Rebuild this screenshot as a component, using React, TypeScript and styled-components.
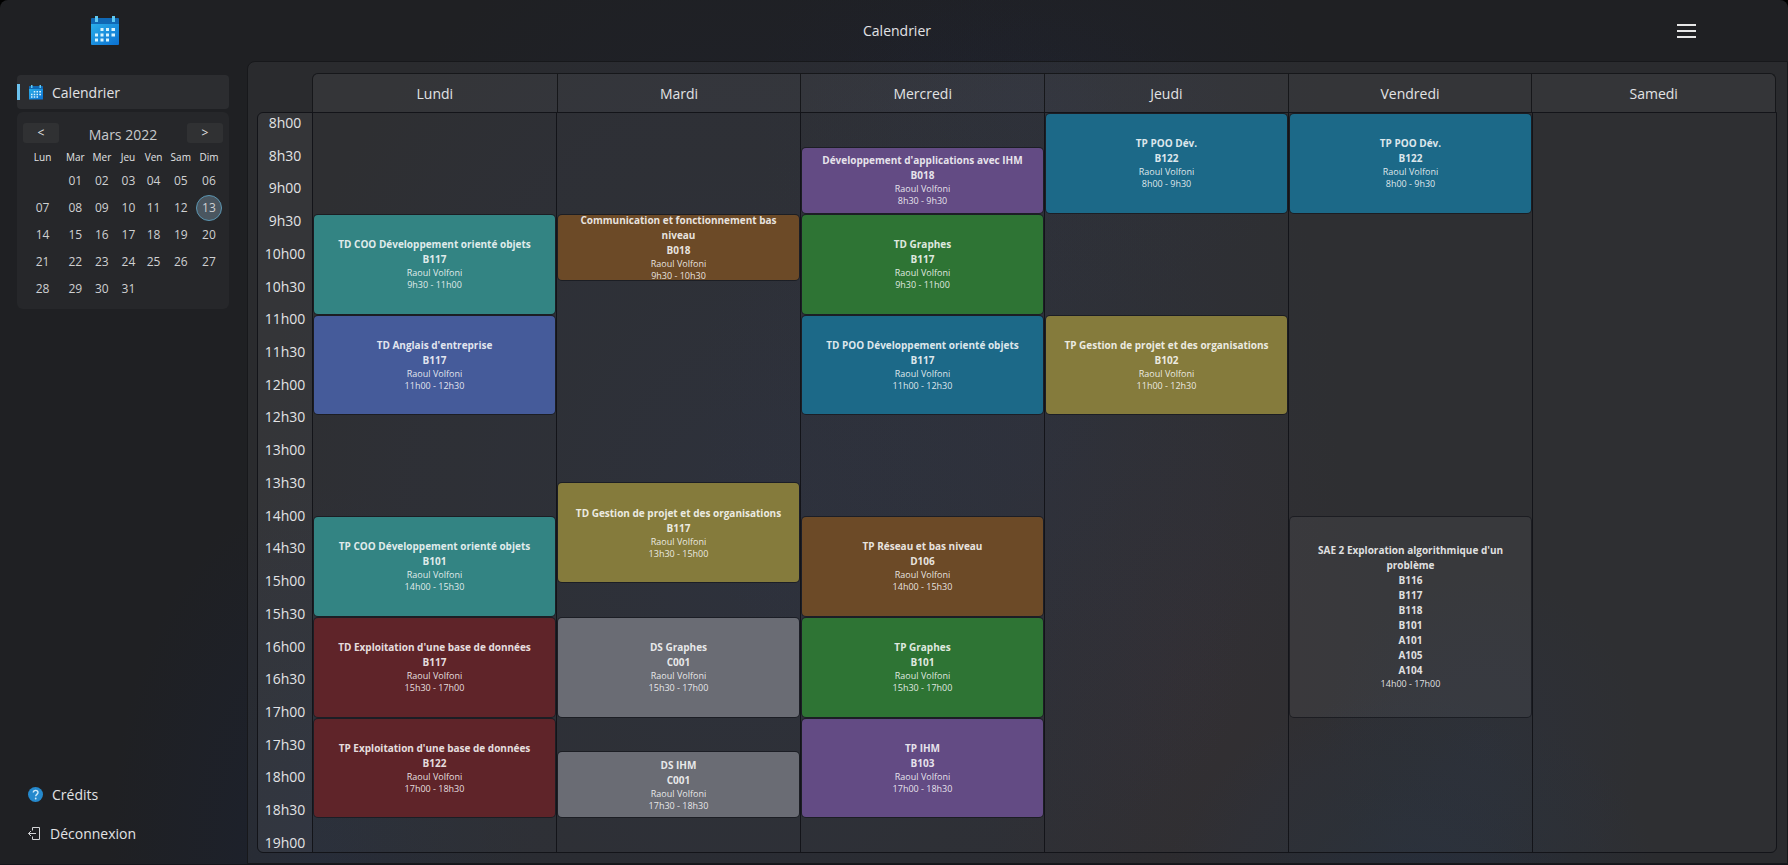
import React from "react";
import styled, { createGlobalStyle } from "styled-components";

const Global = createGlobalStyle`
  * { box-sizing: border-box; }
  html, body, #root { height: 100%; margin: 0; }
  body {
    background: #000;
    color: #e2e3e5;
    font-family: "Open Sans", "Noto Sans", sans-serif;
    font-size: 14px;
  }
  button, table { font: inherit; color: inherit; }
`;

const Shell = styled.div`
  height: 100vh;
  display: grid;
  grid-template-columns: 247px minmax(0, 1fr);
  grid-template-rows: 61px minmax(0, 1fr);
  border-radius: 8px 8px 0 0;
  border-bottom: 1px solid #14151b;
  background:
    radial-gradient(ellipse 16% 24% at 58% 12%, rgba(30, 38, 66, 0.2), transparent),
    radial-gradient(ellipse 18% 50% at 57% 48%, rgba(32, 38, 66, 0.26), transparent),
    radial-gradient(ellipse 28% 74% at 42% 62%, rgba(30, 38, 66, 0.4), transparent),
    radial-gradient(ellipse 12% 44% at 18% 100%, rgba(24, 36, 64, 0.4), transparent),
    radial-gradient(ellipse 14% 24% at 79% 104%, rgba(22, 40, 72, 0.36), transparent),
    radial-gradient(ellipse 9% 20% at 83% 86%, rgba(28, 38, 66, 0.22), transparent),
    radial-gradient(ellipse 12% 40% at 66% 78%, rgba(42, 32, 36, 0.4), transparent),
    #1f2023;
`;

const TopBar = styled.header`
  grid-column: 1 / -1;
  display: grid;
  grid-template-columns: 209px 1fr 203px;
  align-items: center;
`;

const Brand = styled.a`
  justify-self: center;
  display: flex;
`;

const PageTitle = styled.h1`
  margin: 0;
  text-align: center;
  font-size: 14px;
  line-height: 20px;
  font-weight: 400;
`;

const MenuButton = styled.button`
  justify-self: center;
  display: flex;
  padding: 0;
  border: 0;
  background: none;
`;

const Sidebar = styled.nav`
  display: flex;
  flex-direction: column;
  gap: 3px;
  padding: 14px 18px 13px 17px;
`;

const NavLink = styled.a<{ $active?: boolean }>`
  position: relative;
  display: flex;
  align-items: center;
  gap: 9px;
  height: ${(p) => (p.$active ? 34 : 36)}px;
  padding-left: ${(p) => (p.$active ? 12 : 11)}px;
  border-radius: 4px;
  color: inherit;
  text-decoration: none;
  background: ${(p) => (p.$active ? "#2c2d30" : "none")};
  &::before {
    content: "";
    display: ${(p) => (p.$active ? "block" : "none")};
    position: absolute;
    left: 0;
    top: 9px;
    width: 3px;
    height: 16px;
    background: #6cc2ee;
  }
`;

const NavBottom = styled.div`
  margin-top: auto;
  display: flex;
  flex-direction: column;
  gap: 3px;
`;

const MonthCard = styled.section`
  padding: 10px 6px 7px;
  border-radius: 6px;
  background: #26272a;
`;

const MonthHead = styled.div`
  display: flex;
  justify-content: space-between;
  align-items: flex-start;
  height: 24px;
`;

const MonthName = styled.h2`
  margin: 3px 0 0;
  font-size: 14px;
  line-height: 20px;
  font-weight: 400;
  color: #c9cacc;
`;

const StepButton = styled.button`
  width: 36px;
  height: 20px;
  margin-top: 1px;
  padding: 0;
  border: 0;
  border-radius: 3px;
  background: #303133;
  font-size: 12px;
  line-height: 18px;
`;

const MonthTable = styled.table`
  width: 100%;
  border-collapse: collapse;
  table-layout: fixed;
  text-align: center;
  th, td { padding: 0; }
  th { height: 21px; font-size: 10px; font-weight: 400; }
  td { height: 27px; font-size: 12px; color: #cfd0d2; }
`;

const Day = styled.span<{ $today?: boolean }>`
  display: inline-flex;
  align-items: center;
  justify-content: center;
  width: 26px;
  height: 26px;
  border-radius: 50%;
  border: 1px solid ${(p) => (p.$today ? "#5b96b2" : "transparent")};
  background: ${(p) => (p.$today ? "#4a5660" : "none")};
`;

const Panel = styled.main`
  display: grid;
  grid-template-columns: 55px minmax(0, 1fr);
  grid-template-rows: 39px minmax(0, 1fr);
  padding: 11px 10px 10px 9px;
  border: 1px solid #17181b;
  border-radius: 8px 0 0 0;
  background: rgba(255, 255, 255, 0.05);
`;

const DayHeads = styled.div`
  grid-column: 2;
  display: grid;
  grid-template-columns: repeat(6, minmax(0, 1fr));
  margin-right: 1px;
  border: 1px solid #16171a;
  border-bottom: 0;
  border-radius: 6px 6px 0 0;
  background: rgba(255, 255, 255, 0.05);
`;

const DayHead = styled.h2`
  margin: 0;
  display: flex;
  align-items: center;
  justify-content: center;
  font-size: 14px;
  font-weight: 400;
  & + & { border-left: 1px solid #16171a; }
`;

const Schedule = styled.div`
  grid-column: 1 / -1;
  display: grid;
  grid-template-columns: 54px minmax(0, 1fr);
  grid-template-rows: minmax(0, 1fr);
  border: 1px solid #131419;
  border-radius: 6px 0 6px 6px;
  overflow: hidden;
`;

const Hours = styled.div`
  display: flex;
  flex-direction: column;
  justify-content: space-between;
  align-items: center;
  padding-top: 1px;
  background: rgba(255, 255, 255, 0.05);
  font-size: 14px;
  line-height: 18px;
`;

const Days = styled.div`
  display: grid;
  grid-template-columns: repeat(6, minmax(0, 1fr));
  grid-template-rows: minmax(0, 1fr);
  background: rgba(255, 255, 255, 0.02);
`;

const DayColumn = styled.div`
  display: grid;
  grid-template-columns: minmax(0, 1fr);
  grid-template-rows: repeat(22, minmax(0, 1fr));
  border-left: 1px solid #131419;
`;

const Course = styled.article<{ $start: number; $span: number; $color: string }>`
  grid-row: ${(p) => p.$start} / span ${(p) => p.$span};
  min-height: 0;
  margin: 1px;
  padding: 0 16px;
  display: flex;
  flex-direction: column;
  justify-content: center;
  overflow: hidden;
  border-radius: 4px;
  background: ${(p) => p.$color};
  box-shadow: 0 0 0 1px rgba(10, 12, 18, 0.5);
  text-align: center;
  color: rgba(255, 255, 255, 0.86);
`;

const CourseTitle = styled.h3`
  flex-shrink: 0;
  margin: 0;
  font-size: 10px;
  line-height: 15px;
  font-weight: 700;
`;

const CourseInfo = styled.p`
  flex-shrink: 0;
  margin: 0;
  font-size: 9px;
  line-height: 12px;
`;

const CalendarIcon = ({ id, width, height }: { id: string; width: number; height: number }) => (
  <svg viewBox="0 0 28 30" width={width} height={height} aria-hidden="true">
    <defs>
      <linearGradient id={id} x1="0" y1="0" x2="1" y2="1">
        <stop offset="0" stopColor="#2aaeea" />
        <stop offset="1" stopColor="#0b70d0" />
      </linearGradient>
    </defs>
    <path d="M0 8h28v20a1 1 0 0 1-1 1H1a1 1 0 0 1-1-1z" fill={`url(#${id})`} />
    <path d="M1 2h26a1 1 0 0 1 1 1v5H0V3a1 1 0 0 1 1-1z" fill="#1068b4" />
    <path d="M4 0h3v6H4zM21 0h3v6h-3z" fill="#5fc9f2" />
    <path
      d="M9.500 12h3v3h-3zM15 12h3v3h-3zM20.500 12h3.500v3h-3.500zM4 17.500h3v3H4zM9.500 17.500h3v3h-3zM15 17.500h3v3h-3zM20.500 17.500h3.500v3h-3.500zM4 22.500h3v3H4zM9.500 22.500h3v3h-3zM15 22.500h3v3h-3z"
      fill="#d9f4fd"
    />
  </svg>
);

const HelpIcon = () => (
  <svg width="15" height="15" viewBox="0 0 15 15" aria-hidden="true">
    <circle cx="7.500" cy="7.500" r="7.500" fill="#2589cd" />
    <path d="M5.300 5.600c0-3 4.700-3 4.700 0 0 1.700-2.300 1.900-2.300 3.700" fill="none" stroke="#cdeafa" strokeWidth="1.400" />
    <circle cx="7.700" cy="11.500" r="0.900" fill="#cdeafa" />
  </svg>
);

const LeaveIcon = () => (
  <svg width="13" height="13" viewBox="0 0 13 13" fill="none" stroke="#d4d5d7" strokeWidth="1" aria-hidden="true">
    <path d="M4.500 3.500v-3h7v12h-7v-3M.5 6.500H8M3 4 .5 6.500 3 9" />
  </svg>
);

const MenuIcon = () => (
  <svg width="19" height="16" viewBox="0 0 19 16" stroke="#e6e6e6" strokeWidth="2" aria-hidden="true">
    <path d="M0 2h19M0 8h19M0 14h19" />
  </svg>
);

const weekdays = ["Lun", "Mar", "Mer", "Jeu", "Ven", "Sam", "Dim"];
const weeks: (number | null)[][] = [
  [null, 1, 2, 3, 4, 5, 6],
  [7, 8, 9, 10, 11, 12, 13],
  [14, 15, 16, 17, 18, 19, 20],
  [21, 22, 23, 24, 25, 26, 27],
  [28, 29, 30, 31, null, null, null],
];
const today = 13;

const palette = {
  teal: "#338483",
  blue: "#455b9a",
  red: "#5f2429",
  brown: "#6c4a27",
  olive: "#857b3c",
  grey: "#6a6c74",
  violet: "#634b84",
  green: "#2e7434",
  ocean: "#1c6988",
  dark: "rgba(255, 255, 255, 0.05)",
};

type Entry = {
  title: string;
  rooms: string[];
  teacher?: string;
  from: number;
  to: number;
  color: keyof typeof palette;
};

const course = (
  title: string,
  room: string,
  from: number,
  to: number,
  color: keyof typeof palette
): Entry => ({ title, rooms: [room], teacher: "Raoul Volfoni", from, to, color });

const agenda: { day: string; entries: Entry[] }[] = [
  {
    day: "Lundi",
    entries: [
      course("TD COO Développement orienté objets", "B117", 9.5, 11, "teal"),
      course("TD Anglais d'entreprise", "B117", 11, 12.5, "blue"),
      course("TP COO Développement orienté objets", "B101", 14, 15.5, "teal"),
      course("TD Exploitation d'une base de données", "B117", 15.5, 17, "red"),
      course("TP Exploitation d'une base de données", "B122", 17, 18.5, "red"),
    ],
  },
  {
    day: "Mardi",
    entries: [
      course("Communication et fonctionnement bas niveau", "B018", 9.5, 10.5, "brown"),
      course("TD Gestion de projet et des organisations", "B117", 13.5, 15, "olive"),
      course("DS Graphes", "C001", 15.5, 17, "grey"),
      course("DS IHM", "C001", 17.5, 18.5, "grey"),
    ],
  },
  {
    day: "Mercredi",
    entries: [
      course("Développement d'applications avec IHM", "B018", 8.5, 9.5, "violet"),
      course("TD Graphes", "B117", 9.5, 11, "green"),
      course("TD POO Développement orienté objets", "B117", 11, 12.5, "ocean"),
      course("TP Réseau et bas niveau", "D106", 14, 15.5, "brown"),
      course("TP Graphes", "B101", 15.5, 17, "green"),
      course("TP IHM", "B103", 17, 18.5, "violet"),
    ],
  },
  {
    day: "Jeudi",
    entries: [
      course("TP POO Dév.", "B122", 8, 9.5, "ocean"),
      course("TP Gestion de projet et des organisations", "B102", 11, 12.5, "olive"),
    ],
  },
  {
    day: "Vendredi",
    entries: [
      course("TP POO Dév.", "B122", 8, 9.5, "ocean"),
      {
        title: "SAE 2 Exploration algorithmique d'un problème",
        rooms: ["B116", "B117", "B118", "B101", "A101", "A105", "A104"],
        from: 14,
        to: 17,
        color: "dark",
      },
    ],
  },
  { day: "Samedi", entries: [] },
];

const clock = (t: number) => `${Math.floor(t)}h${t % 1 ? "30" : "00"}`;
const hours = Array.from({ length: 23 }, (_, i) => clock(8 + i / 2));

export default function App() {
  return (
    <>
      <Global />
      <Shell>
        <TopBar>
          <Brand href="#" aria-label="Accueil">
            <CalendarIcon id="brand" width={28} height={30} />
          </Brand>
          <PageTitle>Calendrier</PageTitle>
          <MenuButton type="button" aria-label="Menu">
            <MenuIcon />
          </MenuButton>
        </TopBar>

        <Sidebar>
          <NavLink href="#" $active>
            <CalendarIcon id="nav" width={14} height={15} />
            Calendrier
          </NavLink>
          <MonthCard>
            <MonthHead>
              <StepButton type="button" aria-label="Mois précédent">&lt;</StepButton>
              <MonthName>Mars 2022</MonthName>
              <StepButton type="button" aria-label="Mois suivant">&gt;</StepButton>
            </MonthHead>
            <MonthTable>
              <colgroup>
                <col width="39" />
                <col width="26" />
                <col width="27" />
                <col width="25" />
                <col width="26" />
                <col width="28" />
                <col width="28" />
              </colgroup>
              <thead>
                <tr>
                  {weekdays.map((d) => (
                    <th key={d} scope="col">{d}</th>
                  ))}
                </tr>
              </thead>
              <tbody>
                {weeks.map((week, i) => (
                  <tr key={i}>
                    {week.map((d, j) => (
                      <td key={j}>
                        {d && <Day $today={d === today}>{String(d).padStart(2, "0")}</Day>}
                      </td>
                    ))}
                  </tr>
                ))}
              </tbody>
            </MonthTable>
          </MonthCard>
          <NavBottom>
            <NavLink href="#">
              <HelpIcon />
              Crédits
            </NavLink>
            <NavLink href="#">
              <LeaveIcon />
              Déconnexion
            </NavLink>
          </NavBottom>
        </Sidebar>

        <Panel>
          <DayHeads>
            {agenda.map(({ day }) => (
              <DayHead key={day}>{day}</DayHead>
            ))}
          </DayHeads>
          <Schedule>
            <Hours>
              {hours.map((h) => (
                <span key={h}>{h}</span>
              ))}
            </Hours>
            <Days>
              {agenda.map(({ day, entries }) => (
                <DayColumn key={day} aria-label={day}>
                  {entries.map((e) => (
                    <Course
                      key={e.from}
                      $start={(e.from - 8) * 2 + 1}
                      $span={(e.to - e.from) * 2}
                      $color={palette[e.color]}
                    >
                      <CourseTitle>{e.title}</CourseTitle>
                      {e.rooms.map((r) => (
                        <CourseTitle as="p" key={r}>{r}</CourseTitle>
                      ))}
                      {e.teacher && <CourseInfo>{e.teacher}</CourseInfo>}
                      <CourseInfo>{`${clock(e.from)} - ${clock(e.to)}`}</CourseInfo>
                    </Course>
                  ))}
                </DayColumn>
              ))}
            </Days>
          </Schedule>
        </Panel>
      </Shell>
    </>
  );
}
